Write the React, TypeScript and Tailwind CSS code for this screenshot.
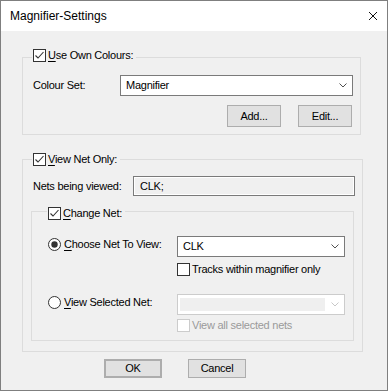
import React from "react";

function Check({ checked = false, disabled = false }: { checked?: boolean; disabled?: boolean }) {
  const c = disabled ? "#cccccc" : "#333333";
  return (
    <svg width="13" height="13" viewBox="0 0 13 13" className="shrink-0 block">
      <rect x="0.5" y="0.5" width="12" height="12" fill="#ffffff" stroke={c} />
      {checked && <polyline points="2.5,6.5 5,9 10.5,3" fill="none" stroke="#333333" strokeWidth="1.1" />}
    </svg>
  );
}

function Radio({ checked = false }: { checked?: boolean }) {
  return (
    <svg width="13" height="13" viewBox="0 0 13 13" className="shrink-0 block">
      <circle cx="6.5" cy="6.5" r="6" fill="#ffffff" stroke="#333333" />
      {checked && <circle cx="6.5" cy="6.5" r="3.2" fill="#333333" />}
    </svg>
  );
}

function Chevron({ color = "#505050" }: { color?: string }) {
  return (
    <svg width="8" height="5" viewBox="0 0 8 5" className="block shrink-0">
      <polyline points="0.5,0.5 4,4 7.5,0.5" fill="none" stroke={color} strokeWidth="1" />
    </svg>
  );
}

function U({ children }: { children: React.ReactNode }) {
  return <span className="underline underline-offset-[1.5px] decoration-[1px]">{children}</span>;
}

function Btn({ children, def = false, w, h }: { children: React.ReactNode; def?: boolean; w: string; h: string }) {
  return (
    <div
      className={
        "flex items-center justify-center bg-[#e1e1e1] " +
        (def ? "border-2 border-[#adadad] " : "border border-[#adadad] ") +
        w +
        " " +
        h
      }
    >
      {children}
    </div>
  );
}

export default function App() {
  return (
    <div className="w-[388px] h-[391px] border border-[#7f7f7f] bg-[#f0f0f0] flex flex-col font-['Liberation_Sans',Arial,sans-serif] text-[11px] leading-[13px] tracking-[-0.25px] text-black">
      {/* Title bar */}
      <div className="h-[30px] bg-white flex items-center justify-between pl-[9px] pr-[9px] shrink-0">
        <span className="text-[12px] tracking-normal">Magnifier-Settings</span>
        <svg width="10" height="10" viewBox="0 0 10 10" className="block">
          <line x1="1" y1="1" x2="9" y2="9" stroke="#111" strokeWidth="1" />
          <line x1="9" y1="1" x2="1" y2="9" stroke="#111" strokeWidth="1" />
        </svg>
      </div>

      <div className="pl-[21px] pt-[26px]">
        {/* Group 1 */}
        <div className="relative w-[339px] h-[78px] border border-[#dcdcdc] pt-[17px] pl-[10px] pr-[7px]">
          <div className="absolute left-[9px] top-[-9px] flex items-center bg-[#f0f0f0] pl-[1px] pr-[3px] h-[13px]">
            <Check checked />
            <span className="ml-[2px]">
              <U>U</U>se Own Colours:
            </span>
          </div>
          <div className="flex items-center h-[21px]">
            <span className="w-[87px] shrink-0">Colour Set:</span>
            <div className="w-[233px] h-[21px] bg-white border border-[#7a7a7a] flex items-center justify-between pl-[5px] pr-[5px]">
              <span>Magnifier</span>
              <Chevron />
            </div>
          </div>
          <div className="flex justify-end gap-[17px] mt-[9px] pr-[1px]">
            <Btn w="w-[54px]" h="h-[22px]">Add...</Btn>
            <Btn w="w-[54px]" h="h-[22px]">Edit...</Btn>
          </div>
        </div>

        {/* Group 2 */}
        <div className="relative mt-[24px] w-[341px] h-[193px] border border-[#dcdcdc] pt-[16px] pl-[8px]">
          <div className="absolute left-[9px] top-[-7px] flex items-center bg-[#f0f0f0] pl-[1px] pr-[3px] h-[13px]">
            <Check checked />
            <span className="ml-[2px]">
              <U>V</U>iew Net Only:
            </span>
          </div>
          <div className="flex items-center h-[20px] pl-[2px]">
            <span className="w-[100px] shrink-0">Nets being viewed:</span>
            <div className="w-[222px] h-[20px] border border-[#7a7a7a] bg-[#f0f0f0] shadow-[inset_0_0_0_1px_#ffffff] flex items-center pl-[6px]">
              CLK;
            </div>
          </div>

          {/* Inner group */}
          <div className="relative mt-[15px] w-[323px] h-[130px] border border-[#dcdcdc] pt-[24px] pl-[16px]">
            <div className="absolute left-[15px] top-[-5px] flex items-center bg-[#f0f0f0] pl-[1px] pr-[3px] h-[13px]">
              <Check checked />
              <span className="ml-[2px]">
                <U>C</U>hange Net:
              </span>
            </div>

            <div className="flex h-[21px]">
              <div className="w-[129px] shrink-0 flex items-center h-[13px] mt-[2px]">
                <Radio checked />
                <span className="ml-[3px]">
                  <U>C</U>hoose Net To View:
                </span>
              </div>
              <div className="w-[168px] h-[21px] bg-white border border-[#7a7a7a] flex items-center justify-between pl-[5px] pr-[5px]">
                <span>CLK</span>
                <Chevron />
              </div>
            </div>

            <div className="flex items-center h-[13px] mt-[6px] pl-[129px]">
              <Check />
              <span className="ml-[2px]">Tracks within magnifier only</span>
            </div>

            <div className="flex h-[21px] mt-[18px]">
              <div className="w-[129px] shrink-0 flex items-center h-[13px] mt-[2px]">
                <Radio />
                <span className="ml-[3px]">
                  <U>V</U>iew Selected Net:
                </span>
              </div>
              <div className="w-[168px] h-[21px] bg-white border border-[#cccccc] flex items-center pl-[2px] pr-[5px]">
                <div className="w-[145px] h-[13px] bg-[#efefef]" />
                <div className="flex-1 flex justify-end">
                  <Chevron color="#c8c8c8" />
                </div>
              </div>
            </div>

            <div className="flex items-center h-[13px] mt-[4px] pl-[129px]">
              <Check disabled />
              <span className="ml-[2px] text-[#9a9a9a]">View all selected nets</span>
            </div>
          </div>
        </div>

        {/* Bottom buttons */}
        <div className="flex gap-[26px] mt-[7px] ml-[82px]">
          <Btn def w="w-[58px]" h="h-[19px]">OK</Btn>
          <Btn w="w-[58px]" h="h-[19px]">Cancel</Btn>
        </div>
      </div>
    </div>
  );
}
